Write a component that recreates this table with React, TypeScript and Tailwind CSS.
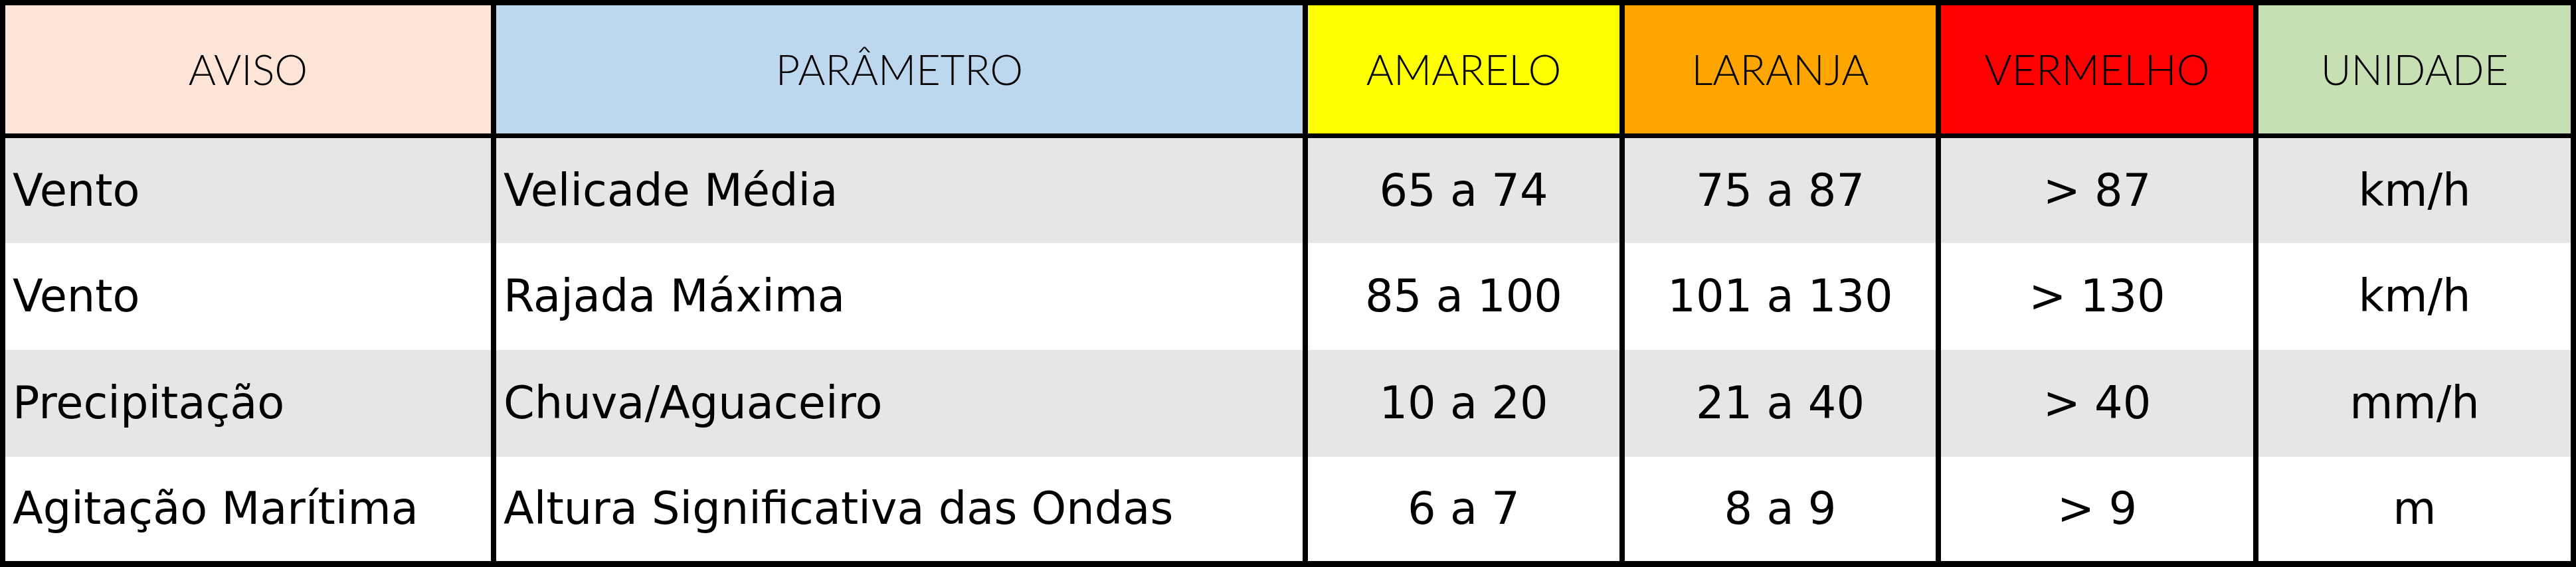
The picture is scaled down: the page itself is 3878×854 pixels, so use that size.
const COLS = 'grid grid-cols-[731px_1214px_469px_468px_470px_470px] gap-x-[8px]'

const headers = [
  { label: 'AVISO', bg: 'bg-[#fce4d6]' },
  { label: 'PARÂMETRO', bg: 'bg-[#bdd7ee]' },
  { label: 'AMARELO', bg: 'bg-[#ffff00]' },
  { label: 'LARANJA', bg: 'bg-[#ffa500]' },
  { label: 'VERMELHO', bg: 'bg-[#ff0000]' },
  { label: 'UNIDADE', bg: 'bg-[#c6e0b4]' },
]

const rows = [
  ['Vento', 'Velicade Média', '65 a 74', '75 a 87', '> 87', 'km/h'],
  ['Vento', 'Rajada Máxima', '85 a 100', '101 a 130', '> 130', 'km/h'],
  ['Precipitação', 'Chuva/Aguaceiro', '10 a 20', '21 a 40', '> 40', 'mm/h'],
  ['Agitação Marítima', 'Altura Significativa das Ondas', '6 a 7', '8 a 9', '> 9', 'm'],
]

export default function App() {
  return (
    <div className="w-[3878px] h-[854px] bg-black pt-[8px] px-[8px] pb-[9px] flex flex-col gap-[7px]">
      {/* header */}
      <div className={`${COLS} h-[193px]`}>
        {headers.map((h) => (
          <div
            key={h.label}
            className={`${h.bg} flex items-center justify-center font-['Lato',sans-serif] font-light text-[63px] text-black`}
          >
            {h.label}
          </div>
        ))}
      </div>

      {/* body */}
      <div className={`${COLS} grid-rows-[158px_161px_161px_157px] font-['DejaVu_Sans',sans-serif] text-[67px] text-black`}>
        {rows.map((r, i) =>
          r.map((cell, j) => (
            <div
              key={`${i}-${j}`}
              className={`flex items-center ${j < 2 ? 'justify-start pl-[11px]' : 'justify-center'} ${
                i % 2 === 0 ? 'bg-[#e6e6e6]' : 'bg-white'
              } whitespace-nowrap`}
            >
              {cell}
            </div>
          )),
        )}
      </div>
    </div>
  )
}
